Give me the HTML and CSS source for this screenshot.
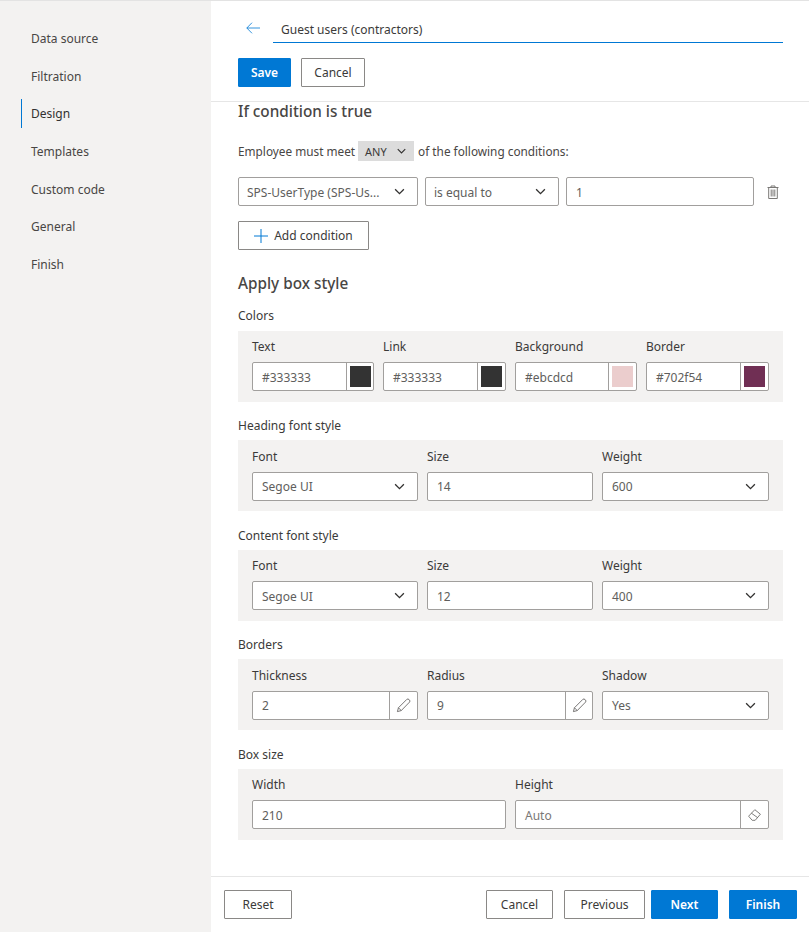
FILE: index.html
```html
<!DOCTYPE html>
<html lang="en">
<head>
<meta charset="utf-8">
<title>Design</title>
<link rel="stylesheet" href="styles.css">
</head>
<body>
<svg class="sprite" width="0" height="0" aria-hidden="true">
  <symbol id="chev" viewBox="0 0 12 8"><path d="M1 1.5 L6 6.5 L11 1.5" fill="none" stroke="currentColor" stroke-width="1.5"/></symbol>
  <symbol id="pencil" viewBox="0 0 16 16"><path d="M1.5 14.5 L2.6 10.4 L11.6 1.4 Q12.6 .6 13.9 1.6 L14.4 2.1 Q15.3 3.3 14.5 4.3 L5.6 13.4 Z M2.6 10.4 L5.6 13.4" fill="none" stroke="currentColor" stroke-width=".9"/></symbol>
</svg>
<div class="app">
  <nav class="side">
    <a class="nav-item">Data source</a>
    <a class="nav-item">Filtration</a>
    <a class="nav-item active">Design</a>
    <a class="nav-item">Templates</a>
    <a class="nav-item">Custom code</a>
    <a class="nav-item">General</a>
    <a class="nav-item">Finish</a>
  </nav>
  <main class="main">
    <header class="head">
      <div class="title-row">
        <svg class="back" viewBox="0 0 14 12" width="14" height="12"><path d="M6 .7 L.8 6 L6 11.3 M.8 6 H14" fill="none" stroke="#0078d4" stroke-width=".8"/></svg>
        <div class="title">Guest users (contractors)</div>
      </div>
      <div class="head-btns">
        <button class="btn primary save">Save</button>
        <button class="btn">Cancel</button>
      </div>
    </header>
    <div class="scroll">
      <h2 class="h-cond">If condition is true</h2>
      <div class="meet">
        <span>Employee must meet</span>
        <span class="chip">ANY<svg class="chev-s"><use href="#chev"/></svg></span>
        <span>of the following conditions:</span>
      </div>
      <div class="cond-row">
        <div class="ctl sel c1"><span class="val">SPS-UserType (SPS-Us...</span><svg class="chev"><use href="#chev"/></svg></div>
        <div class="ctl sel c2"><span class="val">is equal to</span><svg class="chev"><use href="#chev"/></svg></div>
        <div class="ctl c3"><span class="val">1</span></div>
        <svg class="trash" viewBox="0 0 12 14" width="12" height="14"><path d="M.5 2.5 H11.5 M4 2.5 V1 H8 V2.5 M1.7 2.5 V13.5 H10.3 V2.5 M4.2 4.5 V11.5 M6 4.5 V11.5 M7.8 4.5 V11.5" fill="none" stroke="#7a7876" stroke-width="1"/></svg>
      </div>
      <button class="btn add"><svg viewBox="0 0 14 14" width="14" height="14"><path d="M7 0 V14 M0 7 H14" stroke="#0078d4" stroke-width="1" fill="none"/></svg>Add condition</button>
      <h2 class="h-box">Apply box style</h2>

      <section class="group">
        <h3 class="g-title">Colors</h3>
        <div class="panel cols4">
          <div class="field"><label>Text</label><div class="ctl joined"><span class="val">#333333</span><span class="addon narrow"><i class="swatch s-dark"></i></span></div></div>
          <div class="field"><label>Link</label><div class="ctl joined"><span class="val">#333333</span><span class="addon"><i class="swatch s-dark"></i></span></div></div>
          <div class="field"><label>Background</label><div class="ctl joined"><span class="val">#ebcdcd</span><span class="addon"><i class="swatch s-pink"></i></span></div></div>
          <div class="field"><label>Border</label><div class="ctl joined"><span class="val">#702f54</span><span class="addon"><i class="swatch s-plum"></i></span></div></div>
        </div>
      </section>

      <section class="group">
        <h3 class="g-title">Heading font style</h3>
        <div class="panel cols3">
          <div class="field"><label>Font</label><div class="ctl sel"><span class="val">Segoe UI</span><svg class="chev"><use href="#chev"/></svg></div></div>
          <div class="field"><label>Size</label><div class="ctl"><span class="val">14</span></div></div>
          <div class="field"><label>Weight</label><div class="ctl sel"><span class="val">600</span><svg class="chev"><use href="#chev"/></svg></div></div>
        </div>
      </section>

      <section class="group">
        <h3 class="g-title">Content font style</h3>
        <div class="panel cols3">
          <div class="field"><label>Font</label><div class="ctl sel"><span class="val">Segoe UI</span><svg class="chev"><use href="#chev"/></svg></div></div>
          <div class="field"><label>Size</label><div class="ctl"><span class="val">12</span></div></div>
          <div class="field"><label>Weight</label><div class="ctl sel"><span class="val">400</span><svg class="chev"><use href="#chev"/></svg></div></div>
        </div>
      </section>

      <section class="group">
        <h3 class="g-title">Borders</h3>
        <div class="panel cols3">
          <div class="field"><label>Thickness</label><div class="ctl joined"><span class="val">2</span><span class="addon"><svg class="ico"><use href="#pencil"/></svg></span></div></div>
          <div class="field"><label>Radius</label><div class="ctl joined"><span class="val">9</span><span class="addon narrow"><svg class="ico"><use href="#pencil"/></svg></span></div></div>
          <div class="field"><label>Shadow</label><div class="ctl sel"><span class="val">Yes</span><svg class="chev"><use href="#chev"/></svg></div></div>
        </div>
      </section>

      <section class="group">
        <h3 class="g-title">Box size</h3>
        <div class="panel cols2">
          <div class="field"><label>Width</label><div class="ctl"><span class="val">210</span></div></div>
          <div class="field"><label>Height</label><div class="ctl joined"><span class="val muted">Auto</span><span class="addon"><svg class="eraser" viewBox="0 0 13 12" width="13" height="12"><path d="M.6 7.2 L6.8 .7 L12.4 5.2 L7.2 11.3 H4.2 Z M3.4 4.2 L9.6 8.6" fill="none" stroke="#605e5c" stroke-width=".8"/></svg></span></div></div>
        </div>
      </section>
    </div>
    <footer class="foot">
      <button class="btn f-reset">Reset</button>
      <div class="foot-right">
        <button class="btn f-cancel">Cancel</button>
        <button class="btn f-prev">Previous</button>
        <button class="btn primary f-next">Next</button>
        <button class="btn primary f-finish">Finish</button>
      </div>
    </footer>
  </main>
</div>
</body>
</html>
```

FILE: styles.css
```css
* { box-sizing: border-box; }
html, body { margin: 0; height: 100%; }
body {
  font-family: "Noto Sans", "Open Sans", sans-serif;
  font-size: 12px;
  color: #323130;
  background: #fff;
  overflow: hidden;
}
.sprite { position: absolute; }
.app {
  display: flex;
  height: 932px;
  border-top: 1px solid #e3e3e3;
}
.side {
  width: 211px;
  flex: none;
  background: #f3f2f1;
  padding: 18.6px 0 0 21px;
  display: flex;
  flex-direction: column;
}
.nav-item {
  height: 37.67px;
  display: flex;
  align-items: center;
  padding-left: 10px;
  color: #484644;
}
.nav-item.active { color: #323130; position: relative; }
.nav-item.active::before {
  content: "";
  position: absolute;
  left: 0;
  top: 4px;
  height: 29px;
  width: 1px;
  background: #0078d4;
}
.main { flex: 1; min-width: 0; display: flex; flex-direction: column; }
.head {
  height: 101px;
  flex: none;
  border-bottom: 1px solid #e6e6e6;
  padding: 15px 26px 0 27px;
}
.title-row { display: flex; align-items: flex-start; height: 27px; }
.back { margin: 6px 0 0 8px; flex: none; }
.title {
  margin-left: 13px;
  flex: 1;
  height: 27px;
  border-bottom: 1px solid #0078d4;
  padding: 5px 0 0 8px;
  line-height: 17px;
  color: #3b3a39;
}
.head-btns { display: flex; gap: 10px; margin-top: 15px; }
.btn {
  font: inherit;
  height: 28.5px;
  background: #fff;
  border: 1px solid #8a8886;
  border-radius: 1px;
  color: #3b3a39;
  padding: 0;
  display: inline-flex;
  align-items: center;
  justify-content: center;
}
.btn.primary {
  background: #0078d4;
  border-color: #0078d4;
  color: #fff;
  font-weight: 600;
}
.head-btns .btn { width: 64px; }
.head-btns .save { width: 53px; }
.scroll { flex: 1; min-height: 0; padding: 0 26px 0 27px; overflow: hidden; }
.h-cond, .h-box {
  margin: 0;
  font-size: 15.3px;
  font-weight: 500;
  color: #484644;
}
.h-cond { line-height: 18px; }
.h-box { line-height: 20px; margin-top: 23px; }
.meet {
  display: flex;
  align-items: center;
  margin-top: 21px;
  height: 20px;
  font-size: 11.8px;
  color: #484644;
}
.chip {
  display: inline-flex;
  align-items: center;
  justify-content: space-between;
  width: 56px;
  height: 20px;
  margin: 0 4px 0 3px;
  padding: 0 8px 0 7px;
  background: #dcdcdc;
  color: #3b3a39;
  font-size: 11px;
}
.chev-s { width: 9px; height: 6px; color: #323130; }
.cond-row { display: flex; align-items: center; margin-top: 16px; gap: 7px; }
.cond-row .c1 { width: 180px; }
.cond-row .c2 { width: 134px; }
.cond-row .c3 { width: 188px; }
.cond-row .sel .val { padding-left: 8px; }
.trash { margin-left: 6px; }
.ctl {
  height: 29px;
  background: #fff;
  border: 1px solid #a19f9d;
  border-radius: 2px;
  display: flex;
  align-items: center;
  color: #605e5c;
  min-width: 0;
}
.val { flex: 1; min-width: 0; padding: 1px 0 0 9px; white-space: nowrap; overflow: hidden; }
.muted { color: #7a7876; }
.chev { width: 11px; height: 7px; margin-right: 12px; color: #323130; flex: none; }
.add { width: 131px; height: 29px; margin-top: 15px; gap: 6px; }
.h-box + .group { margin-top: 11.7px; }
.h-box + .group .g-title { margin-bottom: 5px; }
.group { margin-bottom: 13.5px; }
.g-title {
  margin: 0 0 4px;
  font-size: 12px;
  font-weight: 400;
  line-height: 21px;
  color: #3b3a39;
}
.panel {
  background: #f3f2f1;
  height: 71px;
  padding: 6.5px 14px 0;
  display: grid;
  gap: 9px;
}
.cols4 { grid-template-columns: 122px 123px 122px 1fr; }
.cols3 { grid-template-columns: 166px 166px 1fr; }
.cols2 { grid-template-columns: 254px 1fr; }
.field { min-width: 0; }
.field label {
  display: block;
  height: 25px;
  line-height: 20.6px;
  color: #3b3a39;
}
.addon {
  flex: none;
  width: 28px;
  height: 100%;
  border-left: 1px solid #a19f9d;
  display: flex;
  align-items: center;
  justify-content: center;
}
.addon.narrow { width: 27px; }
.swatch { display: block; width: 21px; height: 21px; }
.s-dark { background: #333333; }
.s-pink { background: #ebcdcd; }
.s-plum { background: #702f54; }
.ico { width: 15px; height: 15px; color: #605e5c; }
.foot {
  height: 56px;
  flex: none;
  border-top: 1px solid #e6e6e6;
  padding: 13px 12px 0 13px;
  display: flex;
  justify-content: space-between;
  align-items: flex-start;
}
.foot-right { display: flex; }
.f-reset { width: 68px; }
.f-cancel { width: 67px; }
.f-prev { width: 81px; margin-left: 11px; }
.f-next { width: 67px; margin-left: 6px; }
.f-finish { width: 68px; margin-left: 11px; }
```
